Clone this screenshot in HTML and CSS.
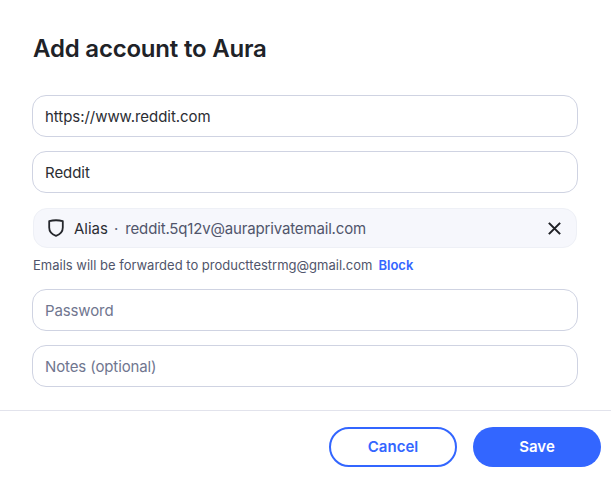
FILE: index.html
```html
<!DOCTYPE html>
<html lang="en">
<head>
<meta charset="utf-8">
<title>Add account to Aura</title>
<link rel="stylesheet" href="styles.css">
</head>
<body>
<div class="dialog">
  <div class="content">
    <h1 class="title">Add account to Aura</h1>
    <div class="field"><span class="value">https://www.reddit.com</span></div>
    <div class="field"><span class="value">Reddit</span></div>
    <div class="alias">
      <svg class="shield" viewBox="0 0 16 18" width="16" height="18" fill="none" stroke="#24262b" stroke-width="1.8" stroke-linejoin="round"><path d="M1.2 2.2C5.5 1 10.5 1 14.8 2.2V8.5C14.8 12.5 12 15.4 8 16.8C4 15.4 1.2 12.5 1.2 8.5Z"/></svg>
      <span class="alias-label">Alias</span>
      <span class="dot">·</span>
      <span class="alias-mail">reddit.5q12v@auraprivatemail.com</span>
      <svg class="close" viewBox="0 0 12 12" width="13" height="13" fill="none" stroke="#1f2125" stroke-width="1.9"><path d="M.8.8 11.2 11.2M11.2.8.8 11.2"/></svg>
    </div>
    <p class="hint"><span>Emails will be forwarded to producttestrmg@gmail.com</span><a class="block">Block</a></p>
    <div class="field"><span class="placeholder">Password</span></div>
    <div class="field"><span class="placeholder">Notes (optional)</span></div>
  </div>
  <div class="footer">
    <button class="btn cancel">Cancel</button>
    <button class="btn save">Save</button>
  </div>
</div>
</body>
</html>
```
FILE: styles.css
```css
* { box-sizing: border-box; }
html, body { margin: 0; padding: 0; background: #fff; }
body { font-family: Inter, "Liberation Sans", sans-serif; color: #24262b; width: 611px; height: 477px; overflow: hidden; }
.dialog { display: flex; flex-direction: column; }
.content { padding: 33px 33px 23px 32px; display: flex; flex-direction: column; }
.title { margin: 0 0 30px 1px; font-size: 24px; line-height: 32px; font-weight: 600; color: #202227; letter-spacing: -0.2px; }
.field { height: 42px; border: 1px solid #cfd3e2; border-radius: 14px; padding: 0 12px; display: flex; align-items: center; font-size: 15px; margin-bottom: 14px; background: #fff; }
.value { color: #2b2d33; letter-spacing: -0.05px; }
.placeholder { color: #70768f; letter-spacing: -0.12px; }
.alias { height: 40px; margin: 1px 1px 0 1px; background: #f6f7fc; border: 1px solid #eef0f6; border-radius: 14px; display: flex; align-items: center; padding: 0 15px 0 14px; font-size: 15px; }
.shield { margin-right: 10px; flex: none; }
.alias-label { color: #2b2d33; }
.dot { margin: 0 7px 0 6px; color: #5b6076; }
.alias-mail { color: #50556b; flex: 1; letter-spacing: -0.16px; }
.close { flex: none; }
.hint { margin: 9px 0 16px 1px; font-size: 13px; line-height: 16px; color: #50556b; }
.block { color: #3366ff; font-weight: 600; margin-left: 6px; }
.field:last-child { margin-bottom: 0; }
.footer { border-top: 1px solid #e2e3ec; display: flex; justify-content: flex-end; gap: 16px; padding: 16px 10px 0 0; }
.btn { width: 128px; height: 40px; border-radius: 20px; font-family: inherit; font-size: 15px; font-weight: 600; cursor: pointer; padding: 0 0 1px; }
.cancel { background: #fff; color: #3366ff; border: 2px solid #3366ff; }
.save { background: #3366ff; color: #fff; border: none; }
```
